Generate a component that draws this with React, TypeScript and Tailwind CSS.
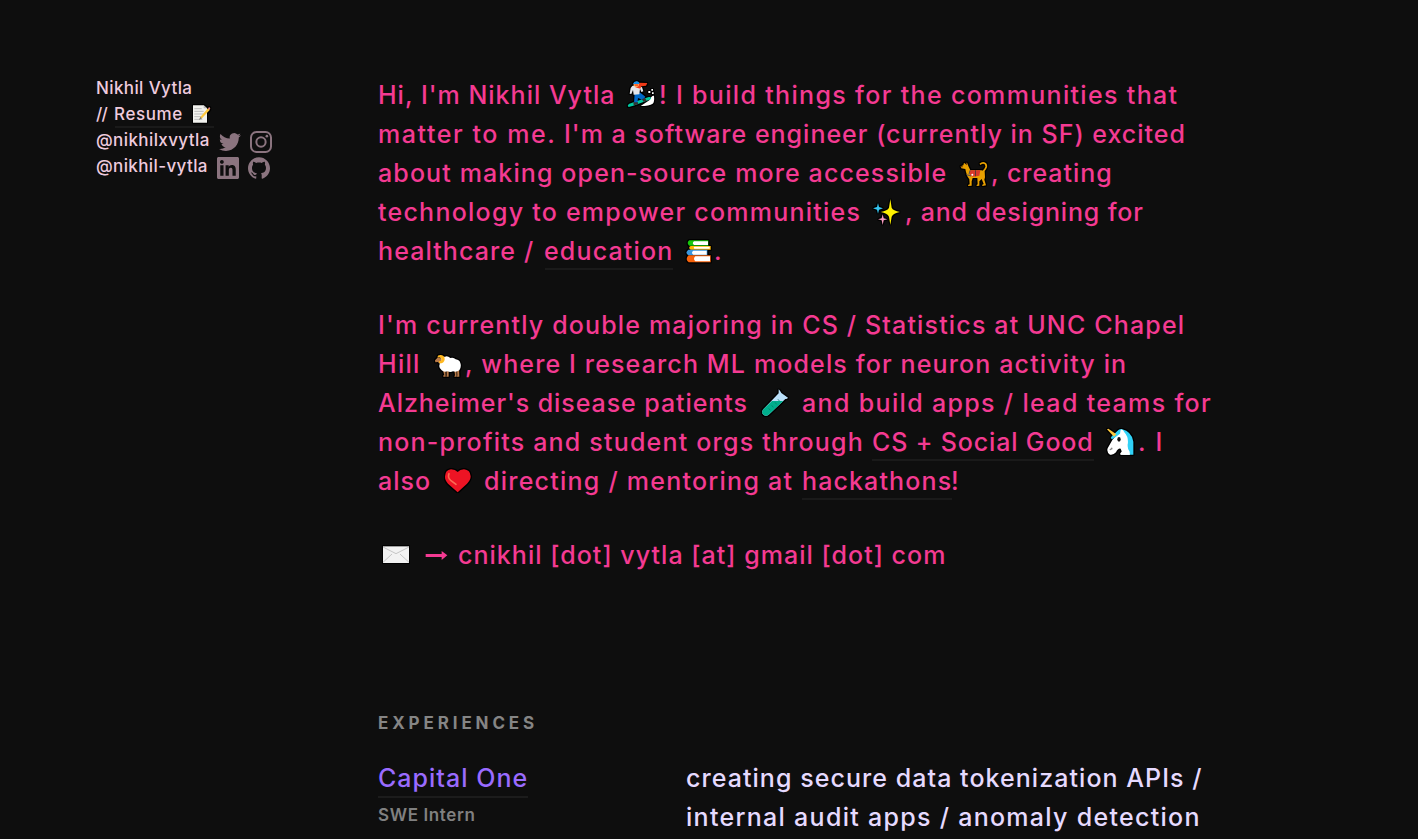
import React from "react";

const outline =
  "shrink-0 overflow-visible [filter:drop-shadow(1px_0_0_#000)_drop-shadow(-1px_0_0_#000)_drop-shadow(0_1px_0_#000)_drop-shadow(0_-1px_0_#000)]";

function Snowboarder() {
  return (
    <svg aria-hidden="true" className={`${outline} h-[39px] w-[33px]`} viewBox="48 18 99 117">
      <path d="M92 108 L118 91 Q124 76 132 77 Q134 96 128 101 Q118 108 92 108Z" fill="#fff" />
      <path d="M115 63h6v6h-6zM124 57h5v5h-5zM126 67h5v5h-5z" fill="#fff" />
      <path d="M56 111 Q50 106 58 101 L116 81 Q125 79 122 88 L70 107Z" fill="#00c8a0" />
      <path d="M74 70 L91 68 L106 80 L98 91 L90 86 L84 84 L82 100 L72 101 Z" fill="#0067c8" />
      <path d="M70 97h14v6l-13 3zM96 87l9-3 5 8-10 3z" fill="#333" />
      <path d="M62 54 Q66 44 78 46 L96 52 L100 64 L94 66 L90 56 L88 73 L71 74 L69 60 L64 72 L59 71Z" fill="#e3e5ea" />
      <path d="M85 38 L112 39 L108 47 L94 49 L91 56 L76 52 L78 47Z" fill="#f03a17" />
      <ellipse cx="79" cy="43" rx="8" ry="8" fill="#ffad55" />
      <path d="M69 42 Q72 32 82 34 Q89 37 88 42Z" fill="#168ee9" />
      <path d="M73 43h12l-1 5h-9z" fill="#ff5a23" />
    </svg>
  );
}

function ServiceDog() {
  return (
    <svg aria-hidden="true" className={`${outline} h-[39px] w-[32px]`} viewBox="27 12 96 117">
      <path d="M90 43 Q98 36 106 41 Q112 48 106 56 L99 65" fill="none" stroke="#e8a000" strokeWidth="5" />
      <path
        d="M32 49 L40 46 L42 38 L47 43 L51 38 L55 48 L61 61 L94 61 L104 64 L105 82 L103 89 L108 106 L98 108 L96 105 L101 102 L95 87 L88 94 L88 107 L80 108 L80 105 L83 103 L82 84 L68 84 L65 94 L65 107 L55 108 L54 105 L59 103 L58 88 L52 79 L48 66 L46 57 L34 55Z"
        fill="#e8a000"
      />
      <path d="M60 61h31l-3 16-20 3-9-4z" fill="#d8392b" />
      <path d="M75 61h3v18h-3z" fill="#5c3b37" />
      <path d="M49 74l14 4M60 61l-3 12" stroke="#555" strokeWidth="3" />
      <circle cx="67" cy="74" r="3" fill="#fff" />
      <path d="M32 48h6v4h-5zM47 38l4 0 0 8-3-2z" fill="#744010" />
    </svg>
  );
}

function Sparkles() {
  return (
    <svg aria-hidden="true" className={`${outline} h-[39px] w-[33px]`} viewBox="21 9 99 117">
      <path d="M76 27 L80 53 Q84 62 105 66 Q85 70 80 80 L76 105 L72 80 Q67 70 47 66 Q68 62 72 53Z" fill="#fff100" />
      <path d="M39 39 L42 51 L54 55 L42 59 L39 71 L36 59 L24 55 L36 51Z" fill="#36c5f0" />
      <path d="M53 73 L56 85 L67 88 L56 91 L53 105 L50 91 L39 88 L50 85Z" fill="#f99bc0" />
    </svg>
  );
}

function Books() {
  return (
    <svg aria-hidden="true" className={`${outline} h-[39px] w-[41px]`} viewBox="-21 6 123 117">
      <path d="M28 31h57v16H28q-10-8 0-16z" fill="#16c60c" />
      <path d="M42 34h42v11H42q-7-5 0-11z" fill="#fff" />
      <path d="M32 48h60v11H32q-9-6 0-11z" fill="#ffb900" />
      <path d="M43 50h46v6H43q-4-3 0-6z" fill="#fff" />
      <path d="M25 59h57v17H25q-11-8 0-17z" fill="#3a96dd" />
      <path d="M40 62h40v12H40q-8-6 0-12z" fill="#fff" />
      <path d="M26 76h66v21H26q-12-10 0-21z" fill="#f7630c" />
      <path d="M46 79h44v15H46q-8-7 0-15z" fill="#fff" />
    </svg>
  );
}

function Ram() {
  return (
    <svg aria-hidden="true" className={`${outline} h-[39px] w-[32px]`} viewBox="24 0 96 117">
      <path d="M54 76h7l1 19h-7v-4h3zM65 76h6v19h-7l1-4zM88 74h6l1 21h-7l2-5zM96 70h6l1 25h-7l1-5z" fill="#b97a48" />
      <path d="M44 46 Q48 34 60 35 Q68 32 76 39 Q86 36 92 43 Q104 45 106 54 Q110 65 103 76 Q94 83 84 79 Q76 83 68 79 Q56 83 50 76 Q40 68 44 58Z" fill="#fff" />
      <path d="M30 46 L39 37 L50 42 L48 54 L42 55 L39 51 L31 52Z" fill="#b97a48" />
      <path d="M37 37 Q38 29 48 30 Q60 32 59 44 Q57 55 44 55 Q39 51 43 48 Q51 48 49 41 Q45 36 37 37Z" fill="#ffb81f" />
    </svg>
  );
}

function TestTube() {
  return (
    <svg aria-hidden="true" className={`${outline} h-[39px] w-[43px]`} viewBox="27 12 129 117">
      <path d="M86 28 Q90 32 94 39 L114 53 Q111 58 106 57 L56 104 Q48 110 40 104 Q33 97 40 88 L86 40Z" fill="#b9def8" />
      <path d="M66 63 H100 L56 104 Q48 110 40 104 Q33 97 40 88Z" fill="#00ae8c" />
      <path d="M84 58l5 6M75 67l5 6M65 76l5 6M56 85l5 6" stroke="#087d69" strokeWidth="2.5" />
    </svg>
  );
}

function Unicorn() {
  return (
    <svg aria-hidden="true" className={`${outline} h-[39px] w-[44px]`} viewBox="912 339 132 117">
      <path d="M978 369 Q984 357 995 357 Q1026 365 1030 395 V434 H1000 L1012 402Z" fill="#31d2f7" />
      <path d="M992 359 Q999 356 1003 367 Q1017 382 1013 405 Q1012 417 1019 425 V434 H993 L995 424 L992 416 Q984 414 978 427 Q970 436 960 434 Q949 426 953 415 L967 390 L978 377Z" fill="#fff" />
      <path d="M962 384 Q970 369 992 359 L990 371 L977 381 L966 388Z" fill="#31d2f7" />
      <path d="M951 358 L955 356 L979 373 L972 380Z" fill="#ffc83d" />
      <ellipse cx="987" cy="388" rx="5" ry="7" fill="#111" />
      <path d="M958 419l8-7 2 5-7 4z" fill="#888" />
      <path d="M991 430 Q994 424 1014 421 L1020 434H991Z" fill="#fff" />
    </svg>
  );
}

function Heart() {
  return (
    <svg aria-hidden="true" className={`${outline} h-[39px] w-[42px]`} viewBox="216 456 126 117">
      <path d="M263 486 Q270 478 282 478 Q301 480 302 499 Q302 511 291 521 L263 547 L234 521 Q224 511 225 499 Q226 480 243 478 Q256 478 263 486Z" fill="#ed1424" />
      <path d="M237 491 Q232 503 242 511 L258 523" fill="none" stroke="#fa6c54" strokeWidth="5" strokeLinecap="round" />
    </svg>
  );
}

function Envelope() {
  return (
    <svg aria-hidden="true" className={`${outline} h-[39px] w-[42px]`} viewBox="24 678 126 117">
      <path d="M39 709h78v50H39z" fill="#f2f2f2" />
      <path d="M39 757l27-25M117 757l-27-25M39 711l39 20 39-20" fill="none" stroke="#c5c5c5" strokeWidth="3" />
    </svg>
  );
}

function Arrow() {
  return (
    <svg aria-hidden="true" className="h-[39px] w-[38px] shrink-0" viewBox="150 678 114 117">
      <path d="M167 732h48v-9l17 13-17 14v-9h-48z" fill="#f43a92" />
    </svg>
  );
}

function Memo() {
  return (
    <svg aria-hidden="true" className={`${outline} h-[26px] w-[24px]`} viewBox="300 93 72 78">
      <path d="M309 106h32l10 9v43h-42z" fill="#f2f2ee" />
      <path d="M313 116h22M313 124h28M313 132h28M313 140h20M313 148h24" stroke="#b0b0b0" strokeWidth="2.5" />
      <path d="M341 106v9h10z" fill="#bbb" />
      <path d="M329 148l2-7 23-26 5 5-23 25z" fill="#ffc83d" />
      <path d="M354 115l4-4 3 5-3 4z" fill="#f08a80" />
      <path d="M327 150l4-9 5 4z" fill="#777" />
    </svg>
  );
}

const glyph = "mt-[4px] h-[22px] w-[22px] shrink-0 text-[#8b747f]";

function Twitter() {
  return (
    <svg aria-label="Twitter" className={glyph} viewBox="0 0 24 24" fill="currentColor">
      <path d="M23.953 4.57a10 10 0 01-2.825.775 4.958 4.958 0 002.163-2.723c-.951.555-2.005.959-3.127 1.184a4.92 4.92 0 00-8.384 4.482C7.69 8.095 4.067 6.13 1.64 3.162a4.822 4.822 0 00-.666 2.475c0 1.71.87 3.213 2.188 4.096a4.904 4.904 0 01-2.228-.616v.06a4.923 4.923 0 003.946 4.827 4.996 4.996 0 01-2.212.085 4.936 4.936 0 004.604 3.417 9.867 9.867 0 01-6.102 2.105c-.39 0-.779-.023-1.17-.067a13.995 13.995 0 007.557 2.209c9.053 0 13.998-7.496 13.998-13.985 0-.21 0-.42-.015-.63A9.935 9.935 0 0024 4.59z" />
    </svg>
  );
}

function Instagram() {
  return (
    <svg aria-label="Instagram" className={glyph} viewBox="0 0 24 24" fill="none" stroke="currentColor" strokeWidth="2.16">
      <rect x="1.08" y="1.08" width="21.84" height="21.84" rx="6" />
      <circle cx="12" cy="12" r="5.08" />
      <circle cx="18.4" cy="5.6" r="1.44" fill="currentColor" stroke="none" />
    </svg>
  );
}

function LinkedIn() {
  return (
    <svg aria-label="LinkedIn" className={glyph} viewBox="0 0 24 24" fill="currentColor">
      <path d="M20.447 20.452h-3.554v-5.569c0-1.328-.027-3.037-1.852-3.037-1.853 0-2.136 1.445-2.136 2.939v5.667H9.351V9h3.414v1.561h.046c.477-.9 1.637-1.85 3.37-1.85 3.601 0 4.267 2.37 4.267 5.455v6.286zM5.337 7.433c-1.144 0-2.063-.926-2.063-2.065 0-1.138.92-2.063 2.063-2.063 1.14 0 2.064.925 2.064 2.063 0 1.139-.925 2.065-2.064 2.065zm1.782 13.019H3.555V9h3.564v11.452zM22.225 0H1.771C.792 0 0 .774 0 1.729v20.542C0 23.227.792 24 1.771 24h20.451C23.2 24 24 23.227 24 22.271V1.729C24 .774 23.2 0 22.222 0h.003z" />
    </svg>
  );
}

function GitHub() {
  return (
    <svg aria-label="GitHub" className={glyph} viewBox="0 0 24 24" fill="currentColor">
      <path d="M12 .297c-6.63 0-12 5.373-12 12 0 5.303 3.438 9.8 8.205 11.385.6.113.82-.258.82-.577 0-.285-.01-1.04-.015-2.04-3.338.724-4.042-1.61-4.042-1.61C4.422 18.07 3.633 17.7 3.633 17.7c-1.087-.744.084-.729.084-.729 1.205.084 1.838 1.236 1.838 1.236 1.07 1.835 2.809 1.305 3.495.998.108-.776.417-1.305.76-1.605-2.665-.3-5.466-1.332-5.466-5.93 0-1.31.465-2.38 1.235-3.22-.135-.303-.54-1.523.105-3.176 0 0 1.005-.322 3.3 1.23.96-.267 1.98-.399 3-.405 1.02.006 2.04.138 3 .405 2.28-1.552 3.285-1.23 3.285-1.23.645 1.653.24 2.873.12 3.176.765.84 1.23 1.91 1.23 3.22 0 4.61-2.805 5.625-5.475 5.92.42.36.81 1.096.81 2.22 0 1.606-.015 2.896-.015 3.286 0 .315.21.69.825.57C20.565 22.092 24 17.592 24 12.297c0-6.627-5.373-12-12-12" />
    </svg>
  );
}

function Line({ children }: { children: React.ReactNode }) {
  return <div className="flex h-[39px] items-start">{children}</div>;
}

function T({ c, children }: { c: string; children: React.ReactNode }) {
  return <span className={`block shrink-0 ${c}`}>{children}</span>;
}

const link = "h-[38px] border-b-2 border-[#1a1a1a]";

export default function App() {
  return (
    <div className="flex h-[839px] overflow-hidden whitespace-pre bg-[#0e0e0e] font-['Inter','Liberation_Sans',sans-serif] font-medium">
      <aside className="w-[378px] shrink-0 pt-[75px] pl-[96px] text-[17px] leading-[26px] text-[#eecbde]">
        <div className="h-[26px] tracking-[0.38px]">Nikhil Vytla</div>
        <div className="flex h-[26px]">
          <T c="w-[19px] tracking-[-0.7px]">{"//"}</T>
          <a className="flex h-[27px] w-[99px] shrink-0 border-b-2 border-[#1a1a1a]">
            <T c="w-[75px] -indent-px tracking-[0.6px]">Resume</T>
            <Memo />
          </a>
        </div>
        <div className="flex h-[26px]">
          <T c="w-[123px] tracking-[0.4px]">@nikhilxvytla</T>
          <div className="flex gap-[9px]">
            <Twitter />
            <Instagram />
          </div>
        </div>
        <div className="flex h-[26px]">
          <T c="w-[121px] tracking-[0.38px]">@nikhil-vytla</T>
          <div className="flex gap-[9px]">
            <LinkedIn />
            <GitHub />
          </div>
        </div>
      </aside>

      <main className="flex grow flex-col pt-[76px] text-[25px] leading-[39px] text-[#f43a92]">
        <section className="flex flex-col gap-[35px]">
          <div>
            <Line>
              <T c="w-[248px] tracking-[1px]">Hi, I'm Nikhil Vytla</T>
              <Snowboarder />
              <T c="tracking-[1.33px]">! I build things for the communities that</T>
            </Line>
            <Line>
              <T c="w-[186px] tracking-[1.57px]">matter to me.</T>
              <T c="tracking-[1px]">I'm a software engineer (currently in SF) excited</T>
            </Line>
            <Line>
              <T c="w-[581px] tracking-[1.117px]">about making open-source more accessible</T>
              <ServiceDog />
              <T c="tracking-[0.96px]">, creating</T>
            </Line>
            <Line>
              <T c="w-[494px] tracking-[1.244px]">technology to empower communities</T>
              <Sparkles />
              <T c="tracking-[0.84px]">, and designing for</T>
            </Line>
            <Line>
              <T c="w-[167px] tracking-[1.1px]">healthcare /</T>
              <T c={`${link} w-[128px] -indent-px tracking-[1.15px]`}>education</T>
              <Books />
              <T c="tracking-[1px]">.</T>
            </Line>
          </div>
          <div>
            <Line>
              <T c="tracking-[1.159px]">I'm currently double majoring in CS / Statistics at UNC Chapel</T>
            </Line>
            <Line>
              <T c="w-[55px] tracking-[1.3px]">Hill</T>
              <Ram />
              <T c="tracking-[1.138px]">, where I research ML models for neuron activity in</T>
            </Line>
            <Line>
              <T c="w-[381px] tracking-[0.934px]">Alzheimer's disease patients</T>
              <TestTube />
              <T c="tracking-[1.338px]">and build apps / lead teams for</T>
            </Line>
            <Line>
              <T c="w-[494px] tracking-[1.2px]">non-profits and student orgs through</T>
              <T c={`${link} w-[222px] tracking-[0.85px]`}>CS + Social Good</T>
              <Unicorn />
              <T c="tracking-[1.7px]">. I</T>
            </Line>
            <Line>
              <T c="w-[64px] tracking-[1px]">also</T>
              <Heart />
              <T c="w-[318px] tracking-[1.24px]">directing / mentoring at</T>
              <T c={`${link} w-[150px] tracking-[1.12px]`}>hackathons</T>
              <T c="-indent-px">!</T>
            </Line>
          </div>
          <Line>
            <Envelope />
            <Arrow />
            <T c="tracking-[1.025px]">cnikhil [dot] vytla [at] gmail [dot] com</T>
          </Line>
        </section>

        <section className="mt-[135px]">
          <h2 className="h-[26px] text-[17px] leading-[26px] font-bold tracking-[3.87px] text-[#858585]">EXPERIENCES</h2>
          <div className="mt-[23px] flex">
            <div className="flex w-[308px] shrink-0 flex-col items-start">
              <a className="h-[39px] w-[150px] border-b-2 border-[#1c1c1c] tracking-[1.02px] text-[#9a6bff]">Capital One</a>
              <div className="mt-[4px] text-[17px] leading-[26px] font-semibold tracking-[0.62px] text-[#808080]">SWE Intern</div>
            </div>
            <div className="text-[#e6daff]">
              <div className="h-[39px] tracking-[1.05px]">creating secure data tokenization APIs /</div>
              <div className="h-[39px] tracking-[1.29px]">internal audit apps / anomaly detection</div>
            </div>
          </div>
        </section>
      </main>
    </div>
  );
}
